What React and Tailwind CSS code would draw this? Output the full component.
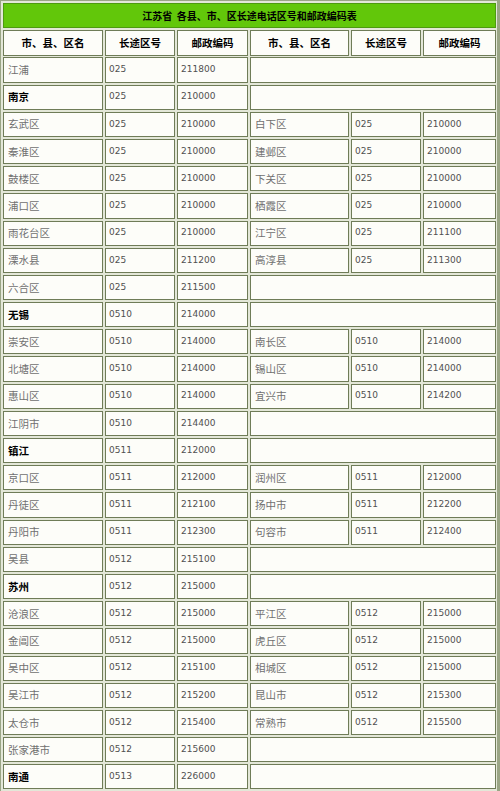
import React from 'react';

const rows = [
    ['江浦', '025', '211800'],
    ['南京', '025', '210000', true],
    ['玄武区', '025', '210000', false, ['白下区', '025', '210000']],
    ['秦淮区', '025', '210000', false, ['建邺区', '025', '210000']],
    ['鼓楼区', '025', '210000', false, ['下关区', '025', '210000']],
    ['浦口区', '025', '210000', false, ['栖霞区', '025', '210000']],
    ['雨花台区', '025', '210000', false, ['江宁区', '025', '211100']],
    ['溧水县', '025', '211200', false, ['高淳县', '025', '211300']],
    ['六合区', '025', '211500'],
    ['无锡', '0510', '214000', true],
    ['崇安区', '0510', '214000', false, ['南长区', '0510', '214000']],
    ['北塘区', '0510', '214000', false, ['锡山区', '0510', '214000']],
    ['惠山区', '0510', '214000', false, ['宜兴市', '0510', '214200']],
    ['江阴市', '0510', '214400'],
    ['镇江', '0511', '212000', true],
    ['京口区', '0511', '212000', false, ['润州区', '0511', '212000']],
    ['丹徒区', '0511', '212100', false, ['扬中市', '0511', '212200']],
    ['丹阳市', '0511', '212300', false, ['句容市', '0511', '212400']],
    ['吴县', '0512', '215100'],
    ['苏州', '0512', '215000', true],
    ['沧浪区', '0512', '215000', false, ['平江区', '0512', '215000']],
    ['金阊区', '0512', '215000', false, ['虎丘区', '0512', '215000']],
    ['吴中区', '0512', '215100', false, ['相城区', '0512', '215000']],
    ['吴江市', '0512', '215200', false, ['昆山市', '0512', '215300']],
    ['太仓市', '0512', '215400', false, ['常熟市', '0512', '215500']],
    ['张家港市', '0512', '215600'],
    ['南通', '0513', '226000', true],
];

const cell = 'border border-[#6f7c58] bg-[#fdfdf9] flex items-center';
const nameFont = { fontFamily: '"Noto Sans CJK SC", sans-serif' };

const Name = ({ text, bold }) => (
    <div
        className={`${cell} pl-[4px] text-[10.5px] ${bold ? 'font-bold text-black' : 'text-[#707070]'}`}
        style={nameFont}
    >
        {text}
    </div>
);

const Num = ({ text }) => (
    <div className={`${cell} pl-[3px] text-[9px] text-[#505050] font-['DejaVu_Sans',sans-serif]`}>
        {text}
    </div>
);

const App = () => {
    return (
        <div className="w-[500px] h-[791px] overflow-hidden bg-[#e3e7d8] border-l-[1px] border-t-[1px] border-r-[3px] border-[#9aa585] pt-[2px] pl-[2px]">
            <div className="grid grid-cols-[100px_70px_71px_99px_70px_73px] auto-rows-[25.2px] gap-[2px]">
                {/* Title */}
                <div
                    className="col-span-6 h-[25px] bg-[#62c70a] border border-[#4d9a10] flex items-center justify-center text-[10px] font-bold text-black whitespace-pre"
                    style={nameFont}
                >
                    江苏省  各县、市、区长途电话区号和邮政编码表
                </div>

                {/* Header */}
                {['市、县、区名', '长途区号', '邮政编码', '市、县、区名', '长途区号', '邮政编码'].map((h, i) => (
                    <div
                        key={i}
                        className={`${cell} h-[26px] justify-center text-[10.5px] font-bold text-black`}
                        style={nameFont}
                    >
                        {h}
                    </div>
                ))}

                {/* Data rows */}
                {rows.map(([name, code, zip, bold, right], i) => (
                    <React.Fragment key={i}>
                        <Name text={name} bold={bold} />
                        <Num text={code} />
                        <Num text={zip} />
                        {right ? (
                            <>
                                <Name text={right[0]} />
                                <Num text={right[1]} />
                                <Num text={right[2]} />
                            </>
                        ) : (
                            <div className={`${cell} col-span-3`}></div>
                        )}
                    </React.Fragment>
                ))}
            </div>
        </div>
    );
};

export default App;
